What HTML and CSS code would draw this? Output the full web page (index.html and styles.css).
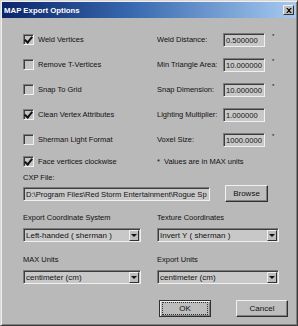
FILE: index.html
```html
<!DOCTYPE html>
<html lang="en">
<head>
    <meta charset="UTF-8">
    <title>MAP Export Options</title>
    <link rel="stylesheet" href="styles.css">
</head>
<body>
    <div class="window">
        <!-- title bar -->
        <div class="titlebar">
            <span class="title">MAP Export Options</span>
            <span class="close-btn">
                <svg width="8" height="7" viewBox="0 0 8 7"><path d="M0 0h2l2 2 2-2h2L5 3.5 8 7H6L4 5 2 7H0l3-3.5z" fill="#000"/></svg>
            </span>
        </div>

        <div class="content">
            <!-- options -->
            <div class="options">
                <label class="check-row"><span class="check on"></span>Weld Vertices</label>
                <div class="field-row"><span class="field-label">Weld Distance:</span><span class="edit">0.500000</span><span class="star">*</span></div>

                <label class="check-row"><span class="check"></span>Remove T-Vertices</label>
                <div class="field-row"><span class="field-label">Min Triangle Area:</span><span class="edit">10.000000</span><span class="star">*</span></div>

                <label class="check-row"><span class="check"></span>Snap To Grid</label>
                <div class="field-row"><span class="field-label">Snap Dimension:</span><span class="edit">10.000000</span><span class="star">*</span></div>

                <label class="check-row"><span class="check on"></span>Clean Vertex Attributes</label>
                <div class="field-row"><span class="field-label">Lighting Multiplier:</span><span class="edit">1.000000</span></div>

                <label class="check-row"><span class="check"></span>Sherman Light Format</label>
                <div class="field-row"><span class="field-label">Voxel Size:</span><span class="edit">1000.0000</span><span class="star">*</span></div>

                <label class="check-row last"><span class="check on"></span>Face vertices clockwise</label>
                <div class="field-row last"><span class="note">*&nbsp; Values are in MAX units</span></div>
            </div>

            <!-- cxp file -->
            <div class="cxp-label">CXP File:</div>
            <div class="cxp-row">
                <span class="edit path">D:\Program Files\Red Storm Entertainment\Rogue Sp</span>
                <span class="button browse">Browse</span>
            </div>

            <!-- drop downs -->
            <div class="combos">
                <div class="combo-group">
                    <div class="combo-label">Export Coordinate System</div>
                    <div class="combo"><span class="combo-text">Left-handed ( sherman )</span><span class="combo-arrow"></span></div>
                </div>
                <div class="combo-group">
                    <div class="combo-label">Texture Coordinates</div>
                    <div class="combo"><span class="combo-text">Invert Y ( sherman )</span><span class="combo-arrow"></span></div>
                </div>
                <div class="combo-group">
                    <div class="combo-label">MAX Units</div>
                    <div class="combo"><span class="combo-text">centimeter (cm)</span><span class="combo-arrow"></span></div>
                </div>
                <div class="combo-group">
                    <div class="combo-label">Export Units</div>
                    <div class="combo"><span class="combo-text">centimeter (cm)</span><span class="combo-arrow"></span></div>
                </div>
            </div>

            <!-- buttons -->
            <div class="buttons">
                <span class="button ok"><span class="focus">OK</span></span>
                <span class="button cancel">Cancel</span>
            </div>
        </div>
    </div>
</body>
</html>
```

FILE: styles.css
```css
/* page */
body {
    margin: 0;
    background: #b9b9b9;
    font-family: "Liberation Sans", Arial, sans-serif;
    font-size: 7.5px;
    color: #111;
}

/* window frame */
.window {
    width: 298px;
    height: 326px;
    box-sizing: border-box;
    background: #b9b9b9;
    border: 1px solid;
    border-color: #d8d8d8 #3a3a3a #3a3a3a #d8d8d8;
    box-shadow: inset 1px 1px 0 #f0f0f0, inset -1px -1px 0 #808080;
    padding: 1px;
}

/* title bar */
.titlebar {
    height: 16px;
    background: linear-gradient(90deg, #0a246a 0%, #3a6ab0 45%, #a6caf0 100%);
    display: flex;
    align-items: center;
    justify-content: space-between;
    padding: 0 2px 0 2px;
}

.title {
    color: #fff;
    font-weight: bold;
    font-size: 7.8px;
}

.close-btn {
    width: 11px;
    height: 10px;
    background: #bdbdbd;
    box-sizing: border-box;
    border: 1px solid;
    border-color: #f0f0f0 #303030 #303030 #f0f0f0;
    display: flex;
    align-items: center;
    justify-content: center;
}

.close-btn svg {
    width: 6px;
    height: 5px;
}

/* content */
.content {
    padding: 9px 0 0 21px;
}

.options {
    display: grid;
    grid-template-columns: 134px 1fr;
    grid-template-rows: repeat(5, 25px) 18px;
}

.check-row {
    display: flex;
    align-items: center;
    gap: 4px;
}

.check {
    width: 11px;
    height: 11px;
    box-sizing: border-box;
    background: #c4c4c4;
    border: 1px solid;
    border-color: #7c7c7c #f0f0f0 #f0f0f0 #7c7c7c;
    box-shadow: inset 1px 1px 0 #3c3c3c;
    position: relative;
}

.check.on::after {
    content: "";
    position: absolute;
    left: 2px;
    top: 0px;
    width: 3px;
    height: 6px;
    border: solid #111;
    border-width: 0 2px 2px 0;
    transform: rotate(40deg);
}

.field-row {
    display: flex;
    align-items: center;
}

.field-label {
    width: 66px;
}

.edit {
    box-sizing: border-box;
    height: 14px;
    width: 42px;
    background: #c8c8c8;
    border: 1px solid;
    border-color: #7c7c7c #f0f0f0 #f0f0f0 #7c7c7c;
    box-shadow: inset 1px 1px 0 #3c3c3c;
    padding: 1px 0 0 2px;
    line-height: 11px;
    font-size: 7.6px;
    white-space: nowrap;
    overflow: hidden;
}

.star {
    margin-left: 7px;
    align-self: flex-start;
    margin-top: 6px;
    font-size: 6px;
}

.note {
    padding-left: 0;
}

/* cxp file */
.cxp-label {
    margin-top: 2px;
    height: 12px;
    line-height: 12px;
}

.cxp-row {
    display: flex;
    align-items: center;
    gap: 15px;
    margin-top: 1px;
}

.edit.path {
    width: 187px;
    height: 14px;
    padding-left: 2px;
}

.button {
    box-sizing: border-box;
    height: 17px;
    background: #bdbdbd;
    border: 1px solid;
    border-color: #f0f0f0 #303030 #303030 #f0f0f0;
    box-shadow: inset -1px -1px 0 #808080;
    display: flex;
    align-items: center;
    justify-content: center;
    font-size: 8px;
}

.browse {
    width: 43px;
}

/* combos */
.combos {
    display: grid;
    grid-template-columns: 134px 122px;
    row-gap: 12px;
    margin-top: 10px;
}

.combo-label {
    height: 12px;
    line-height: 12px;
}

.combo {
    margin-top: 4px;
    box-sizing: border-box;
    height: 14px;
    width: 118px;
    background: #c8c8c8;
    border: 1px solid;
    border-color: #7c7c7c #f0f0f0 #f0f0f0 #7c7c7c;
    box-shadow: inset 1px 1px 0 #3c3c3c;
    display: flex;
    align-items: stretch;
    padding: 1px 1px 0 2px;
}

.combo-group:nth-child(even) .combo {
    width: 122px;
}

.combo-text {
    flex: 1;
    font-size: 8px;
    line-height: 11px;
    white-space: nowrap;
}

.combo-arrow {
    width: 10px;
    box-sizing: border-box;
    background: #bdbdbd;
    border: 1px solid;
    border-color: #f0f0f0 #303030 #303030 #f0f0f0;
    position: relative;
}

.combo-arrow::after {
    content: "";
    position: absolute;
    left: 1px;
    top: 3px;
    border-style: solid;
    border-width: 3px 3px 0 3px;
    border-color: #111 transparent transparent transparent;
}

/* buttons */
.buttons {
    display: flex;
    gap: 25px;
    margin: 16px 0 0 136px;
}

.ok {
    width: 52px;
    border-color: #303030;
    box-shadow: inset 1px 1px 0 #f0f0f0, inset -1px -1px 0 #808080;
}

.focus {
    display: block;
    width: 44px;
    height: 11px;
    line-height: 11px;
    text-align: center;
    outline: 1px dotted #333;
}

.cancel {
    width: 52px;
}
```
